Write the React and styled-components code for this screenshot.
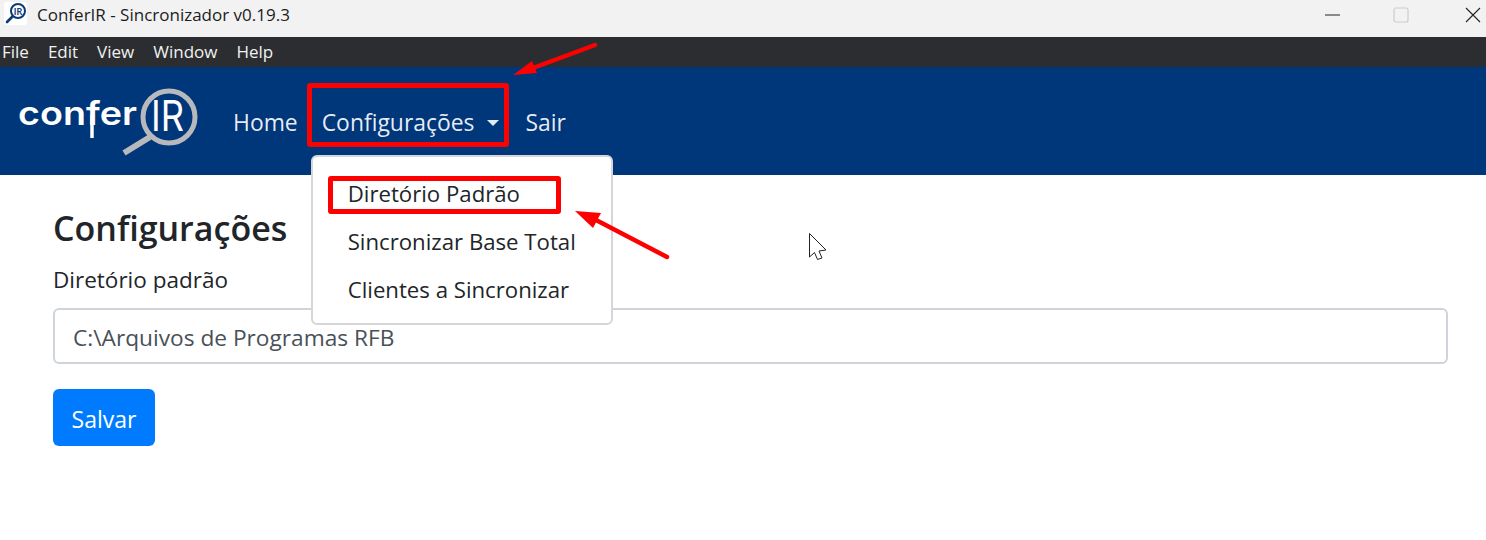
import React from 'react';
import styled, { createGlobalStyle } from 'styled-components';

const GlobalStyle = createGlobalStyle`
  * { box-sizing: border-box; }
  html, body { margin: 0; padding: 0; background: #fff; }
  body {
    font-family: "Open Sans", "Noto Sans", sans-serif;
    color: #212529;
  }
`;

const Page = styled.div`
  position: relative;
  width: 1486px;
  height: 540px;
  overflow: hidden;
  background: #fff;
`;

const TitleBar = styled.div`
  display: flex;
  align-items: center;
  height: 37px;
  padding: 0 0 0 4px;
  background: #f2f2f2;
  color: #1c1c1c;
`;
const WindowTitle = styled.span`
  margin-left: 10px;
  margin-top: -8px;
  font-size: 17px;
  flex: 1;
`;
const WindowIcon = styled.svg`
  margin-top: -10px;
`;
const WindowControls = styled.div`
  display: flex;
  align-items: center;
  height: 100%;
`;
const WindowButton = styled.div`
  display: flex;
  align-items: center;
  justify-content: center;
  flex: none;
  width: ${(p) => p.$w}px;
  height: 100%;
  padding-bottom: 8px;
`;

const MenuBar = styled.div`
  display: flex;
  align-items: center;
  gap: 19px;
  height: 30px;
  padding: 0 0 2px 2px;
  background: #2b2d30;
  color: #f1f1f1;
  font-size: 17px;
`;

const Navbar = styled.nav`
  display: flex;
  align-items: center;
  height: 108px;
  padding-left: 18px;
  background: #00367a;
`;
const Logo = styled.svg`
  display: block;
  width: 180px;
  height: 80px;
  margin-right: 23px;
`;
const NavList = styled.div`
  display: flex;
  align-items: center;
  padding-top: 4px;
`;
const NavItem = styled.div`
  position: relative;
  display: flex;
  align-items: center;
  padding: 8px 12px;
  margin-left: ${(p) => p.$ml || 0}px;
  color: rgba(255, 255, 255, 0.92);
  font-size: 22.9px;
  line-height: 36px;
`;
const Caret = styled.span`
  display: block;
  margin-left: 13px;
  border-top: 6px solid #fff;
  border-left: 6px solid transparent;
  border-right: 6px solid transparent;
  opacity: 0.9;
`;

const Highlight = styled.div`
  position: absolute;
  border: 5px solid #f00;
  border-radius: 3px;
  pointer-events: none;
`;
const NavHighlight = styled(Highlight)`
  left: -3px;
  right: 2px;
  top: -14px;
  bottom: 2px;
`;
const ItemHighlight = styled(Highlight)`
  left: 15px;
  top: 6px;
  width: 233px;
  height: 38px;
`;

const Dropdown = styled.div`
  position: absolute;
  top: 58px;
  left: 1px;
  z-index: 5;
  width: 302px;
  height: 170px;
  padding: 13px 0;
  background: #fff;
  border: 2px solid #d6d6d8;
  border-radius: 6px;
`;
const DropdownItem = styled.div`
  position: relative;
  height: 48px;
  padding-left: 35px;
  color: #212529;
  font-size: 22.2px;
  line-height: 48px;
  white-space: nowrap;
`;

const Main = styled.main`
  padding: 30px 38px 0 53px;
`;
const Heading = styled.h1`
  margin: 0 0 11px;
  font-size: 34px;
  font-weight: 600;
  line-height: 46px;
  color: #212529;
`;
const Label = styled.label`
  display: block;
  margin-bottom: 10px;
  font-size: 22.5px;
  line-height: 36px;
`;
const Input = styled.div`
  display: flex;
  align-items: center;
  height: 56px;
  padding: 3px 0 0 18px;
  border: 2px solid #ced4da;
  border-radius: 6px;
  color: #495057;
  font-size: 22.7px;
`;
const Button = styled.button`
  display: block;
  width: 102px;
  height: 57px;
  margin-top: 25px;
  padding: 3px 0 0;
  border: 0;
  border-radius: 6px;
  background: #007bff;
  color: #fff;
  font-family: inherit;
  font-size: 23px;
`;

const Annotations = styled.svg`
  position: absolute;
  left: 0;
  top: 0;
  z-index: 10;
  pointer-events: none;
`;

function App() {
  return (
    <Page>
      <GlobalStyle />
      <TitleBar>
        <WindowIcon width="23" height="23" viewBox="0 0 23 23">
          <rect width="23" height="23" rx="3" fill="#fff" />
          <circle cx="14" cy="9" r="7" fill="none" stroke="#0c3a75" strokeWidth="2" />
          <path d="M8.500 14.500 3 20" stroke="#0c3a75" strokeWidth="2.6" strokeLinecap="round" />
          <text x="14" y="12.500" textAnchor="middle" fontSize="9" fontFamily="Lato, sans-serif" fontWeight="700" fill="#0c3a75">IR</text>
        </WindowIcon>
        <WindowTitle>ConferIR - Sincronizador v0.19.3</WindowTitle>
        <WindowControls>
          <WindowButton $w={21}>
            <svg width="16" height="2" viewBox="0 0 16 2"><path d="M0 1h15" stroke="#222" strokeWidth="1" /></svg>
          </WindowButton>
          <WindowButton $w={116}>
            <svg width="16" height="16" viewBox="0 0 16 16"><rect x="1" y="1" width="14" height="14" rx="2" fill="none" stroke="#cccccc" strokeWidth="1.2" /></svg>
          </WindowButton>
          <WindowButton $w={27}>
            <svg width="16" height="16" viewBox="0 0 16 16"><path d="M1 1l14 14M15 1 1 15" stroke="#222" strokeWidth="1.1" /></svg>
          </WindowButton>
        </WindowControls>
      </TitleBar>

      <MenuBar>
        <span>File</span>
        <span>Edit</span>
        <span>View</span>
        <span>Window</span>
        <span>Help</span>
      </MenuBar>

      <Navbar>
        <Logo viewBox="0 0 180 80">
          <text x="0" y="44" fontFamily="Inter, sans-serif" fontSize="33" fontWeight="600" fill="#fff" textLength="119" lengthAdjust="spacingAndGlyphs">confer</text>
          <path d="M74 34v23" stroke="#fff" strokeWidth="3.500" />
          <circle cx="151" cy="36" r="26" fill="none" stroke="#b7b9bc" strokeWidth="5" />
          <path d="M132 56 106 72" stroke="#b7b9bc" strokeWidth="6" />
          <text x="133" y="50" fontFamily="Inter, sans-serif" fontSize="42" fill="#fff" textLength="33" lengthAdjust="spacingAndGlyphs">IR</text>
        </Logo>
        <NavList>
          <NavItem>Home</NavItem>
          <NavItem>
            Configurações
            <Caret />
            <NavHighlight />
            <Dropdown>
              <DropdownItem>
                Diretório Padrão
                <ItemHighlight />
              </DropdownItem>
              <DropdownItem>Sincronizar Base Total</DropdownItem>
              <DropdownItem>Clientes a Sincronizar</DropdownItem>
            </Dropdown>
          </NavItem>
          <NavItem $ml={2}>Sair</NavItem>
        </NavList>
      </Navbar>

      <Main>
        <Heading>Configurações</Heading>
        <Label>Diretório padrão</Label>
        <Input>C:\Arquivos de Programas RFB</Input>
        <Button>Salvar</Button>
      </Main>

      <Annotations width="1486" height="540" viewBox="0 0 1486 540">
        <path d="M595 45 533 68" stroke="#f00" strokeWidth="4.5" strokeLinecap="round" />
        <path d="M513 75 532 61 537 73Z" fill="#f00" />
        <path d="M667 257 596 220" stroke="#f00" strokeWidth="4.5" strokeLinecap="round" />
        <path d="M575 211 601 213 593 228Z" fill="#f00" />
        <path d="M809.5 233.5V257l5-4.5 3 7 4.500-1.500-3-7 7-1z" fill="#fff" stroke="#222" strokeWidth="1" />
      </Annotations>
    </Page>
  );
}

export default App;
